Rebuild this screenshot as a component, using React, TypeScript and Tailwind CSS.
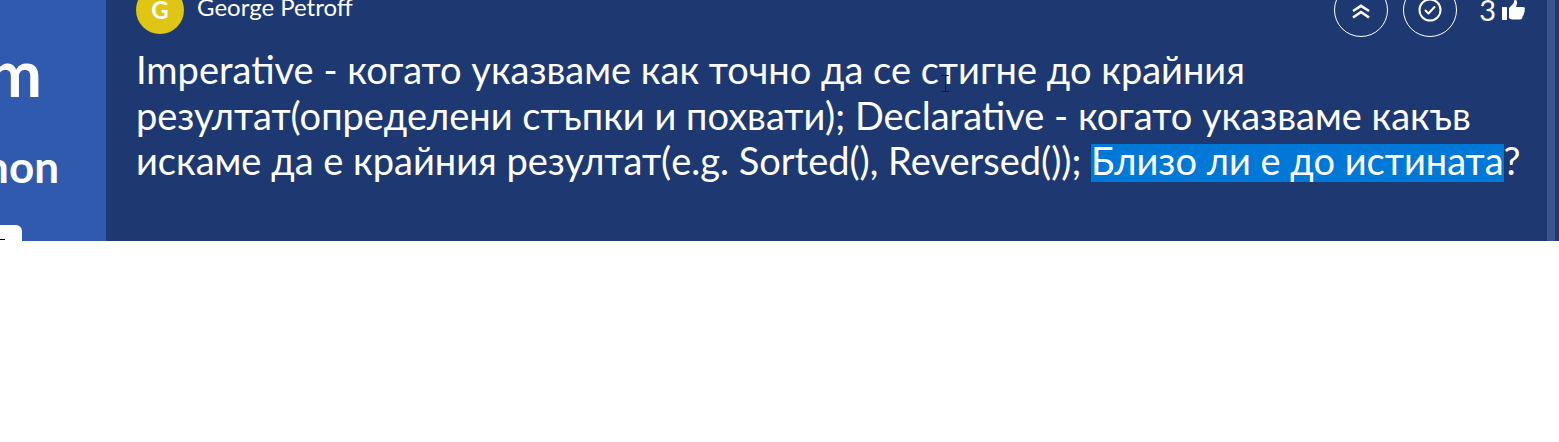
function ChevronsIcon() {
  return (
    <svg width="20" height="15" viewBox="0 0 20 15" fill="none" stroke="#fff" strokeWidth="2.6" strokeLinejoin="miter">
      <path d="M2 7 L10 1.8 L18 7" />
      <path d="M2 13.5 L10 8 L18 13.5" />
    </svg>
  );
}

function ThumbIcon() {
  return (
    <svg width="23" height="20" viewBox="0 0 23 20" fill="#fff">
      <rect x="0" y="7" width="5" height="13" rx="0.5" />
      <path d="M7 8 L11 4 C12 3 12 1 12.5 0 C14.5 -0.3 15.5 1.5 15 3.5 L14 7 L21 7 C23 7 23.3 9 22.5 10 C23 11.5 22.5 12.5 21.8 13 C22 14.5 21.5 15.5 20.6 16 C20.8 18 19.5 19.5 18 19.5 L11 19.5 C9 19.5 8 18.5 7 18.2 Z" />
    </svg>
  );
}

function CheckCircle() {
  return (
    <svg width="24" height="24" viewBox="0 0 24 24" fill="none" stroke="#fff" strokeWidth="2" strokeLinecap="round" strokeLinejoin="round">
      <circle cx="12" cy="12" r="10.5" />
      <path d="M7.5 12.5 L10.5 15.5 L16.5 9" />
    </svg>
  );
}

export default function App() {
  return (
    <div className="relative h-[442px] bg-white overflow-hidden" style={{ fontFamily: 'Lato, "Open Sans", sans-serif' }}>
      <div className="flex h-[241px] overflow-hidden text-white">
        {/* Side panel, cut off by the window */}
        <div className="w-[106px] shrink-0 bg-[#2f5aae] overflow-hidden">
          <div className="-ml-[110px] pt-[37px]">
            <div className="text-[65px] leading-[70px] font-bold text-right w-[152px]">m</div>
            <div className="mt-[35px] text-[44px] leading-[48px] font-bold text-right w-[169px]">hon</div>
            <div className="mt-[35px] w-[132px] h-[30px] rounded-md bg-white pt-[14px] pl-[110px]">
              <div className="w-[5px] h-px bg-black"></div>
            </div>
          </div>
        </div>

        {/* Answer */}
        <div className="flex-1 min-w-0 bg-[#1e3971] pl-[30px] pr-[22px]">
          <div className="flex items-start justify-between -mt-[18px] h-[55px]">
            <div className="flex items-center gap-[13px] mt-[4px]">
              <div className="w-[48px] h-[48px] rounded-full bg-[#dfc614] flex items-center justify-center text-[24px] font-bold">G</div>
              <span className="text-[24px] mb-[6px]">George Petroff</span>
            </div>
            <div className="flex items-center mt-px">
              <div className="w-[54px] h-[54px] rounded-full border border-white flex items-center justify-center pt-[3px]">
                <ChevronsIcon />
              </div>
              <div className="ml-[15px] w-[54px] h-[54px] rounded-full border border-white flex items-center justify-center">
                <CheckCircle />
              </div>
              <span className="ml-[22px] text-[29px]">3</span>
              <span className="ml-[6px]"><ThumbIcon /></span>
            </div>
          </div>
          <div className="mt-[10px] text-[38px] leading-[45.5px] whitespace-nowrap">
            Imperative - когато указваме как точно да се стигне до крайния
            <br />
            резултат(определени стъпки и похвати); Declarative - когато указваме какъв
            <br />
            искаме да е крайния резултат(e.g. Sorted(), Reversed()); <span className="inline-block leading-[32px] pb-[6px] bg-[#0078d7]">Близо ли е до истината</span>?
          </div>
        </div>
        <div className="w-[8px] shrink-0 bg-[#3a5590]"></div>
        <div className="w-[4px] shrink-0 bg-[#1e3971]"></div>
      </div>
      {/* Mouse text cursor over the answer */}
      <div className="absolute left-[941px] top-[75px] w-[8px] h-[17px] flex flex-col items-center justify-between">
        <div className="w-[8px] h-px bg-[#101a3a]"></div>
        <div className="w-px flex-1 bg-[#101a3a]"></div>
        <div className="w-[8px] h-px bg-[#101a3a]"></div>
      </div>
    </div>
  );
}
